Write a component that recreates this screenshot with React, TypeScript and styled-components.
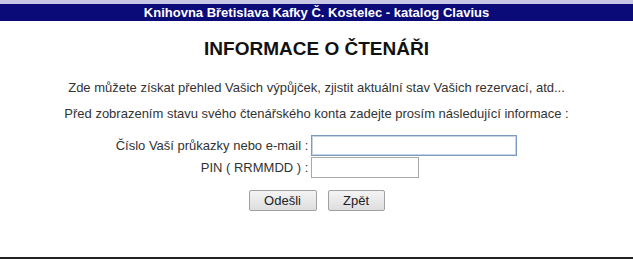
import React from "react";
import styled, { createGlobalStyle } from "styled-components";

const GlobalStyle = createGlobalStyle`
  body {
    margin: 0;
    background: #ffffff;
    font-family: "Liberation Sans", Arial, sans-serif;
    color: #222222;
  }
`;

const StyledPage = styled.div`
  width: 100%;
  height: 259px;
  display: flex;
  flex-direction: column;
  border-top: 4px solid #c8c8e6;
  border-bottom: 2px solid #222222;
  box-sizing: border-box;
`;

const StyledTopBar = styled.div`
  height: 17px;
  background: #0a0a78;
  color: #ffffff;
  font-family: "Liberation Sans Narrow", "Arial Narrow", "Liberation Sans", sans-serif;
  font-weight: bold;
  font-size: 13px;
  line-height: 17px;
  text-align: center;
`;

const StyledTitle = styled.h1`
  margin: 17px 0 0;
  font-size: 19px;
  font-weight: bold;
  color: #111111;
  text-align: center;
  line-height: 22px;
`;

const StyledText = styled.p<{ $gap: number }>`
  margin: ${({ $gap }) => $gap}px 0 0;
  font-size: 13px;
  line-height: 15px;
  color: #333333;
  text-align: center;
`;

const StyledForm = styled.form`
  margin-top: 14px;
  display: flex;
  flex-direction: column;
  align-items: center;
`;

const StyledFields = styled.div`
  display: grid;
  grid-template-columns: auto auto;
  column-gap: 3px;
  row-gap: 1px;
  align-items: center;
`;

const StyledLabel = styled.label`
  font-size: 13px;
  color: #333333;
  text-align: right;
  justify-self: end;
`;

const StyledInput = styled.input<{ $width: number; $focused?: boolean }>`
  width: ${({ $width }) => $width}px;
  height: 21px;
  box-sizing: border-box;
  padding: 0 3px;
  font-size: 13px;
  font-family: inherit;
  border: 1px solid ${({ $focused }) => ($focused ? "#7a9cc0" : "#a9a9a9")};
  box-shadow: ${({ $focused }) => ($focused ? "inset 0 0 0 1px #c4d4e6" : "none")};
  outline: none;
  justify-self: start;
`;

const StyledButtons = styled.div`
  margin-top: 12px;
  display: flex;
  gap: 11px;
`;

const StyledButton = styled.button<{ $width: number }>`
  width: ${({ $width }) => $width}px;
  height: 21px;
  padding: 0;
  font-family: "Liberation Sans", Arial, sans-serif;
  font-size: 13px;
  color: #222222;
  background: linear-gradient(#f4f4f4, #dedede);
  border: 1px solid #a0a0a0;
  border-radius: 2px;
`;

function App() {
  return (
    <>
      <GlobalStyle />
      <StyledPage>
        <StyledTopBar>Knihovna Břetislava Kafky Č. Kostelec - katalog Clavius</StyledTopBar>
        <StyledTitle>INFORMACE O ČTENÁŘI</StyledTitle>
        <StyledText $gap={20}>
          Zde můžete získat přehled Vašich výpůjček, zjistit aktuální stav Vašich rezervací, atd...
        </StyledText>
        <StyledText $gap={11}>
          Před zobrazením stavu svého čtenářského konta zadejte prosím následující informace :
        </StyledText>
        <StyledForm onSubmit={(e) => e.preventDefault()}>
          <StyledFields>
            <StyledLabel htmlFor="login">Číslo Vaší průkazky nebo e-mail :</StyledLabel>
            <StyledInput id="login" $width={206} $focused />
            <StyledLabel htmlFor="pin">PIN ( RRMMDD ) :</StyledLabel>
            <StyledInput id="pin" $width={108} />
          </StyledFields>
          <StyledButtons>
            <StyledButton type="submit" $width={68}>Odešli</StyledButton>
            <StyledButton type="button" $width={57}>Zpět</StyledButton>
          </StyledButtons>
        </StyledForm>
      </StyledPage>
    </>
  );
}

export default App;
